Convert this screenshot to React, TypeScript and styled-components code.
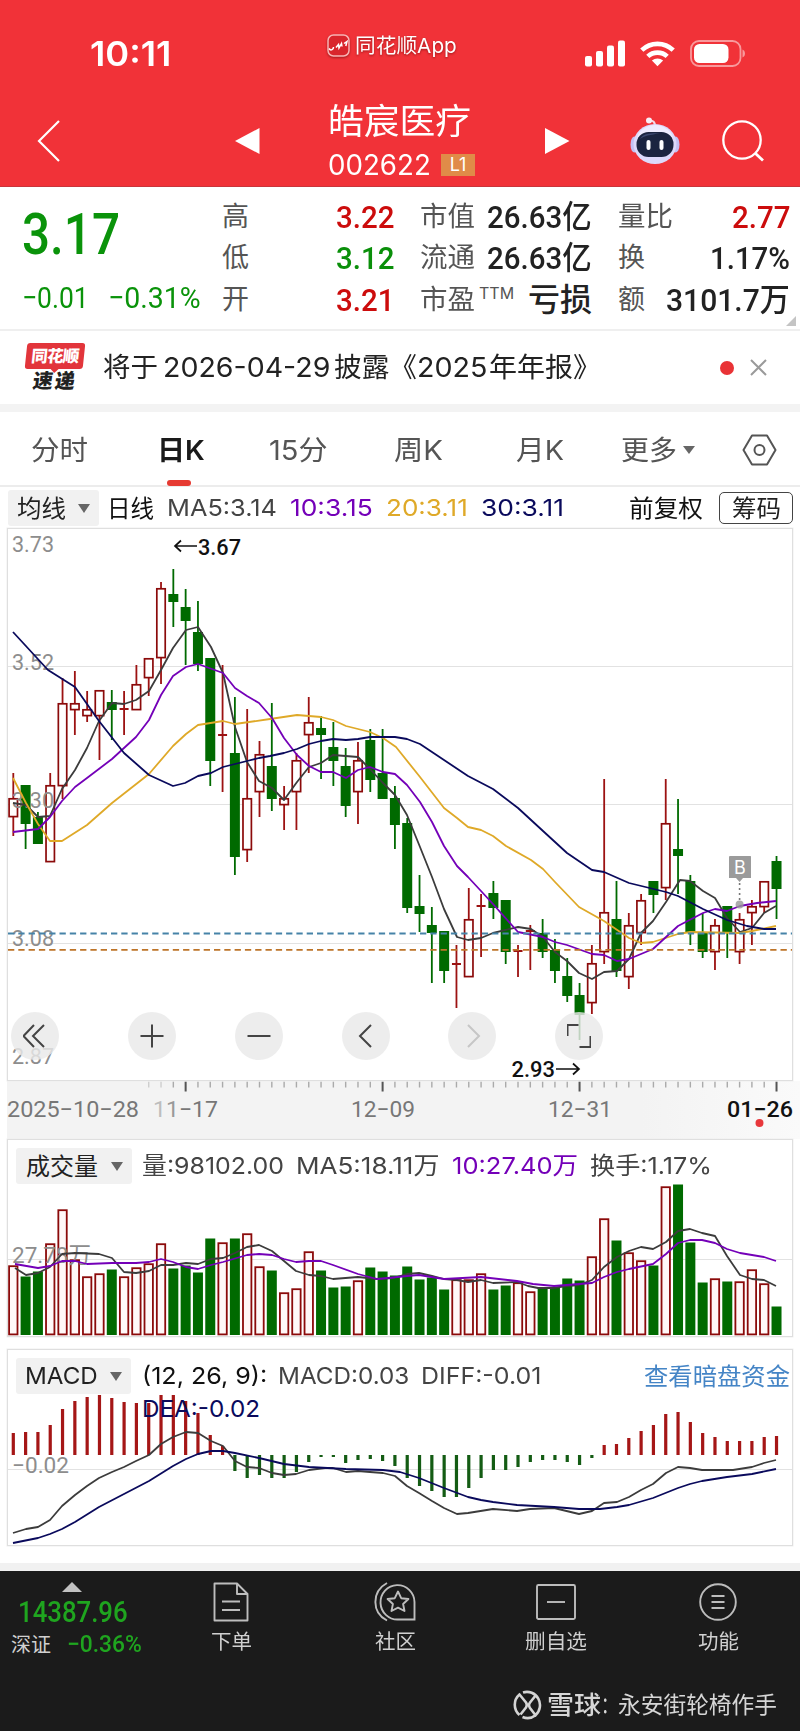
import React, { useLayoutEffect, useRef, useState } from "react";
import styled, { createGlobalStyle } from "styled-components";

const SANS = 'Inter, "Noto Sans CJK SC", sans-serif';
const DIN = 'Roboto, "Noto Sans CJK SC", sans-serif';

const UP = "#8b0a0a";
const UP_BODY = "#9c1212";
const DOWN = "#006a00";
const NAVY = "#0a0a5c";
const PURPLE = "#7400b8";
const ORANGE = "#dfa928";
const INK = "#3c3c3c";

const Global = createGlobalStyle`
  * { box-sizing: border-box; }
  body { margin: 0; background: #fff; font-family: ${SANS}; }
  svg { display: block; }
`;

/* ---------- text that keeps a given width ---------- */

const FitBox = styled.span<{ $w: number }>`
  display: block;
  flex: none;
  width: ${(p) => p.$w}px;
  white-space: nowrap;
`;

const FitInner = styled.span<{ $size: number; $weight: number; $color: string; $din?: boolean }>`
  display: inline-block;
  transform-origin: 0 50%;
  font-family: ${(p) => (p.$din ? DIN : SANS)};
  font-size: ${(p) => p.$size}px;
  font-weight: ${(p) => p.$weight};
  color: ${(p) => p.$color};
  line-height: ${(p) => Math.round(p.$size * 1.2)}px;
  vertical-align: top;
`;

type FitProps = {
  w: number;
  size: number;
  weight?: number;
  color?: string;
  din?: boolean;
  className?: string;
  children: React.ReactNode;
};

function Fit({ w, size, weight = 400, color = "#222", din, className, children }: FitProps) {
  const ref = useRef<HTMLSpanElement>(null);
  const [k, setK] = useState(1);
  useLayoutEffect(() => {
    if (ref.current) setK(w / ref.current.offsetWidth);
  }, [w]);
  return (
    <FitBox $w={w} className={className}>
      <FitInner
        ref={ref}
        $size={size}
        $weight={weight}
        $color={color}
        $din={din}
        style={{ transform: `scaleX(${k})` }}
      >
        {children}
      </FitInner>
    </FitBox>
  );
}

/* ---------- page ---------- */

const Page = styled.div`
  width: 800px;
  height: 1731px;
  overflow: hidden;
  display: flex;
  flex-direction: column;
  background: #fff;
`;

const Header = styled.header`
  height: 187px;
  background: #f13238;
  border-bottom: 1px solid #c9353b;
`;

const StatusBar = styled.div`
  height: 95px;
  display: flex;
  align-items: center;
  padding: 12px 54px 0 90px;
`;

const AppTag = styled.div`
  display: flex;
  align-items: center;
  gap: 5px;
  margin: -16px 0 0 156px;
  filter: drop-shadow(0 1px 1px rgba(90, 0, 0, 0.55));
`;

const StatusIcons = styled.div`
  margin-left: auto;
  display: flex;
  align-items: center;
  gap: 15px;
`;

const NavBar = styled.nav`
  height: 91px;
  display: grid;
  grid-template-columns: 233px 95px 217px 85px 90px 80px;
  align-items: center;
`;

const NavCell = styled.div<{ $pad?: number }>`
  padding-left: ${(p) => p.$pad ?? 0}px;
`;

const TitleBlock = styled.div`
  display: flex;
  flex-direction: column;
  gap: 6px;
`;

const CodeLine = styled.div`
  display: flex;
  align-items: center;
  gap: 10px;
`;

const LevelBadge = styled.span`
  width: 34px;
  height: 22px;
  background: #e08b48;
  color: #fff;
  font-size: 18px;
  line-height: 22px;
  text-align: center;
`;

/* ---------- quote ---------- */

const Quote = styled.section`
  position: relative;
  height: 144px;
  padding: 9px 12px 0 22px;
  display: grid;
  grid-template-columns: 200px 198px 198px 170px;
  border-bottom: 2px solid #efefef;
`;

const PriceBlock = styled.div`
  padding-top: 5px;
`;

const ChangeLine = styled.div`
  display: flex;
  gap: 19px;
  margin-top: 11px;
`;

const StatColumn = styled.div<{ $w: number }>`
  width: ${(p) => p.$w}px;
  display: grid;
  grid-template-rows: repeat(3, 41.5px);
`;

const Stat = styled.div`
  display: flex;
  align-items: center;
  justify-content: space-between;
`;

const StatLabel = styled.div`
  display: flex;
  align-items: flex-start;
  gap: 4px;
`;

const Corner = styled.i`
  position: absolute;
  right: 4px;
  bottom: 3px;
  border-style: solid;
  border-width: 0 0 10px 10px;
  border-color: transparent transparent #c4c4c4 transparent;
`;

/* ---------- notice ---------- */

const Notice = styled.section`
  height: 73px;
  padding: 0 33px 0 25px;
  display: flex;
  align-items: center;
`;

const Express = styled.div`
  width: 60px;
  display: flex;
  flex-direction: column;
  align-items: center;
  margin-right: 18px;
`;

const Bubble = styled.div`
  position: relative;
  width: 58px;
  height: 26px;
  border-radius: 3px;
  background: #e2353b;
  transform: skewX(-6deg);
  color: #fff;
  font-size: 16.5px;
  font-weight: 900;
  line-height: 26px;
  text-align: center;
  letter-spacing: -0.8px;
  &::after {
    content: "";
    position: absolute;
    left: 26px;
    top: 26px;
    border-style: solid;
    border-width: 4px 4px 0 4px;
    border-color: #e2353b transparent transparent transparent;
  }
`;

const BubbleFoot = styled.div`
  transform: skewX(-8deg);
  font-size: 20px;
  font-weight: 900;
  line-height: 23px;
  margin-top: 1px;
  letter-spacing: 2px;
  color: #222;
`;

const NoticeDot = styled.i`
  width: 14px;
  height: 14px;
  border-radius: 50%;
  background: #e93336;
  margin: 0 16px 0 auto;
`;

/* ---------- tabs ---------- */

const Tabs = styled.div`
  height: 83px;
  border-top: 8px solid #f3f3f3;
  border-bottom: 2px solid #ececec;
  display: grid;
  grid-template-columns: 31px 126px 112px 125px 122px 105px 121px 1fr;
  align-items: center;
`;

const Tab = styled.div<{ $active?: boolean }>`
  position: relative;
  display: flex;
  align-items: center;
  height: 100%;
  padding-top: 3px;
  gap: 6px;
  ${(p) =>
    p.$active &&
    `&::after {
      content: "";
      position: absolute;
      left: 10px;
      bottom: -1px;
      width: 24px;
      height: 6px;
      border-radius: 3px;
      background: #e63a32;
    }`}
`;

const Caret = styled.i<{ $size?: number }>`
  border-style: solid;
  border-width: ${(p) => (p.$size ?? 6) * 1.4}px ${(p) => p.$size ?? 6}px 0;
  border-color: #666 transparent transparent;
`;

/* ---------- indicator rows and panels ---------- */

const IndicatorRow = styled.div`
  height: 41px;
  padding: 1px 7px 0 8px;
  display: flex;
  align-items: center;
`;

const Picker = styled.div<{ $w: number; $pad: number }>`
  width: ${(p) => p.$w}px;
  height: 36px;
  padding: 0 9px 0 ${(p) => p.$pad}px;
  display: flex;
  align-items: center;
  justify-content: space-between;
  background: #f1f1f1;
  border-radius: 3px;
`;

const Gap = styled.span<{ $w: number }>`
  flex: 0 0 ${(p) => p.$w}px;
`;

const Push = styled.span`
  margin-left: auto;
`;

const ChipButton = styled.button`
  width: 74px;
  height: 32px;
  margin-left: 16px;
  padding: 0 0 0 11px;
  border: 1.5px solid #444;
  border-radius: 5px;
  background: #fff;
  display: flex;
  align-items: center;
`;

const Panel = styled.section<{ $h: number; $mt?: number }>`
  position: relative;
  height: ${(p) => p.$h}px;
  margin: ${(p) => p.$mt ?? 0}px 7px 0;
  border: 1px solid #dfdfdf;
  box-shadow: 0 0 0 0.5px #efefef;
`;

const PanelHead = styled.div`
  height: 45px;
  padding: 7px 2px 0 8px;
  display: flex;
  align-items: center;
`;

const Controls = styled.div`
  position: absolute;
  left: 3px;
  bottom: 20px;
  width: 592px;
  height: 48px;
  display: grid;
  grid-template-columns: 116.5px 107px 107px 106.5px 106.5px 48px;
`;

const RoundButton = styled.button<{ $dim?: boolean }>`
  width: 48px;
  height: 48px;
  padding: 0;
  border: 0;
  border-radius: 50%;
  background: rgba(233, 233, 233, 0.82);
  color: ${(p) => (p.$dim ? "#c6c6c6" : "#444")};
  display: grid;
  place-items: center;
`;

const Axis = styled.div`
  margin-left: 7px;
  height: 58px;
  background: linear-gradient(90deg, #f3f3f3 80%, #fafafa);
`;

/* ---------- bottom bar ---------- */

const BottomBar = styled.footer`
  margin-top: auto;
  height: 168px;
  border-top: 8px solid #f1f1f1;
  background: #1b1b1b;
  display: flex;
  flex-direction: column;
`;

const BottomItems = styled.div`
  height: 110px;
  display: grid;
  grid-template-columns: 158px 146px 182px 140px 184px;
  padding-top: 11px;
`;

const IndexBlock = styled.div`
  padding-left: 11px;
`;

const IndexCaret = styled.i`
  display: block;
  width: 0;
  margin-left: 51px;
  border-style: solid;
  border-width: 0 10px 10px;
  border-color: transparent transparent #c2c2c2;
`;

const IndexValue = styled.div`
  padding-left: 7px;
  margin-top: 3px;
`;

const IndexChange = styled.div`
  display: flex;
  align-items: center;
  gap: 16px;
  margin-top: 0;
`;

const BottomItem = styled.div`
  display: flex;
  flex-direction: column;
  align-items: center;
  gap: 8px;
  color: #bdbdbd;
`;

const Watermark = styled.div`
  display: flex;
  align-items: center;
  padding-left: 513px;
  height: 48px;
`;

/* ---------- chart data ---------- */

const X0 = 13.3;
const STEP = 12.31;
const cx = (i: number) => X0 + STEP * i;

type Candle = [up: 0 | 1, top: number, bottom: number, high: number, low: number];

const candles: Candle[] = [
  [1, 798, 817, 773, 836], [0, 785, 824, 785, 849], [0, 817, 844, 812, 844], [1, 785, 862, 773, 862],
  [1, 703, 786, 678, 799], [1, 703, 710, 671, 735], [1, 709, 716, 691, 722], [1, 690, 716, 690, 760],
  [0, 702, 710, 690, 740], [1, 709, 709, 691, 735], [1, 684, 710, 665, 710], [1, 658, 678, 658, 696],
  [1, 588, 658, 582, 684], [0, 594, 602, 569, 627], [0, 607, 621, 589, 665], [0, 632, 664, 601, 671],
  [0, 658, 761, 658, 786], [1, 735, 735, 665, 792], [0, 753, 857, 697, 875], [1, 798, 850, 709, 862],
  [1, 754, 792, 741, 817], [0, 766, 799, 703, 811], [1, 798, 805, 786, 830], [1, 760, 792, 753, 830],
  [1, 722, 735, 697, 773], [0, 728, 735, 716, 779], [0, 747, 761, 722, 786], [0, 766, 806, 748, 817],
  [1, 760, 792, 742, 824], [0, 740, 780, 729, 792], [0, 773, 799, 729, 799], [0, 798, 825, 786, 849],
  [0, 823, 908, 818, 913], [0, 906, 914, 875, 932], [0, 925, 933, 907, 983], [0, 931, 971, 931, 983],
  [1, 964, 964, 945, 1008], [1, 919, 977, 888, 977], [1, 906, 906, 894, 957], [0, 893, 908, 881, 919],
  [0, 900, 952, 900, 964], [1, 951, 951, 945, 977], [1, 931, 931, 925, 970], [0, 933, 952, 919, 958],
  [0, 950, 971, 939, 983], [0, 976, 996, 958, 1002], [0, 995, 1015, 983, 1040], [1, 963, 1003, 945, 1014],
  [1, 912, 952, 779, 964], [0, 919, 971, 881, 977], [1, 925, 977, 913, 989], [1, 900, 933, 894, 945],
  [0, 881, 895, 881, 913], [1, 823, 888, 779, 900], [0, 849, 856, 799, 894], [0, 881, 933, 875, 945],
  [0, 932, 952, 913, 958], [1, 925, 952, 919, 970], [0, 906, 932, 906, 958], [1, 919, 952, 913, 964],
  [1, 906, 913, 900, 945], [1, 881, 907, 881, 913], [0, 861, 889, 856, 919],
];

const volumeTops = [
  1266, 1277, 1272, 1244, 1210, 1260, 1277, 1274, 1270, 1277, 1268, 1264, 1244, 1269, 1266, 1273, 1239, 1243,
  1239, 1234, 1267, 1271, 1293, 1289, 1252, 1271, 1288, 1287, 1281, 1268, 1272, 1276, 1267, 1280, 1278, 1290,
  1280, 1280, 1274, 1290, 1286, 1283, 1292, 1288, 1288, 1279, 1281, 1257, 1219, 1241, 1253, 1261, 1266, 1187,
  1185, 1243, 1283, 1279, 1282, 1282, 1270, 1284, 1307,
];

const macdEnds = [
  1433, 1432, 1432, 1425, 1409, 1401, 1397, 1395, 1398, 1402, 1403, 1403, 1395, 1395, 1401, 1413, 1435, 1446,
  1471, 1478, 1475, 1478, 1478, 1472, 1462, 1457, 1457, 1463, 1460, 1459, 1461, 1466, 1478, 1486, 1491, 1497,
  1497, 1488, 1478, 1470, 1470, 1467, 1462, 1460, 1460, 1462, 1465, 1458, 1445, 1444, 1438, 1431, 1425, 1414,
  1412, 1422, 1433, 1437, 1441, 1441, 1441, 1437, 1436,
];

const ma30 =
  "13,632 48,670 75,687 99,721 124,753 149,775 173,786 185,783 198,776 211,773 223,767 235,764 247,761 259,758 270,756 284,753 297,749 309,744 321,741 333,739 346,740 358,739 370,737 395,737 407,739 420,744 444,760 468,776 493,789 518,808 543,831 567,853 592,870 604,872 629,883 666,892 678,896 703,909 727,920 747,926 764,929 776,929";
const ma20 =
  "13,778 26,803 38,824 50,841 62,841 87,825 112,803 149,774 173,746 186,734 198,725 223,721 235,724 270,719 297,715 321,717 333,720 346,726 358,729 370,732 383,738 396,747 420,777 444,808 457,818 468,827 481,830 493,836 506,846 531,860 543,869 555,882 579,907 604,921 629,938 641,943 653,942 678,934 690,932 740,933 752,931 776,926";
const ma10 =
  "13,832 38,829 50,817 62,801 75,787 87,778 112,759 136,737 149,720 161,695 173,676 186,667 198,664 223,673 235,688 247,696 259,703 272,718 284,738 297,755 309,766 321,772 333,772 346,778 358,770 370,767 383,772 395,774 407,785 420,802 432,822 444,846 457,866 468,877 481,891 493,904 518,932 543,937 555,942 567,945 592,954 604,955 617,961 629,959 653,949 678,926 703,913 715,909 727,911 740,906 757,903 776,901";
const ma5 =
  "13,803 26,805 38,817 50,816 62,789 75,770 87,748 99,721 112,703 124,704 136,700 149,691 161,670 173,648 186,630 198,627 211,647 223,673 235,727 247,762 259,781 272,788 284,800 297,782 309,767 321,763 333,755 358,757 370,769 382,782 395,795 407,815 420,847 432,877 444,909 457,937 468,940 481,938 493,933 518,927 531,929 543,937 555,952 567,961 579,973 592,979 604,972 617,971 629,959 641,933 653,921 666,902 680,880 690,881 703,891 715,898 727,918 740,932 752,928 764,913 776,906";

const vol5 =
  "15,1268 26,1275 38,1273 50,1267 62,1254 75,1253 99,1254 112,1258 124,1272 136,1273 149,1271 161,1265 173,1265 186,1263 198,1264 211,1259 223,1258 235,1253 247,1247 259,1245 272,1251 284,1261 296,1271 309,1275 321,1276 333,1279 358,1277 377,1279 393,1278 407,1274 419,1273 432,1276 444,1279 457,1280 468,1282 481,1280 493,1283 517,1282 528,1286 538,1288 552,1288 567,1286 579,1285 592,1280 604,1267 617,1257 629,1251 641,1247 653,1249 666,1242 678,1231 690,1229 702,1233 715,1236 727,1256 740,1275 752,1279 764,1280 776,1286";
const vol10 =
  "15,1264 38,1268 50,1266 62,1261 75,1261 87,1264 112,1263 136,1263 149,1262 161,1259 173,1262 186,1267 198,1269 211,1265 223,1262 247,1255 259,1254 272,1255 284,1259 296,1262 309,1261 321,1261 333,1265 358,1274 377,1279 388,1278 407,1276 419,1275 444,1279 481,1277 517,1281 533,1284 554,1286 579,1284 592,1283 604,1277 617,1272 629,1269 653,1264 666,1254 678,1243 690,1240 702,1240 715,1243 727,1249 740,1253 764,1257 776,1261";

const diff =
  "13,1533 26,1529 38,1527 50,1520 62,1506 75,1495 87,1486 99,1478 112,1472 124,1467 136,1461 149,1455 161,1444 173,1437 186,1432 198,1433 211,1441 223,1446 235,1461 247,1467 259,1468 272,1473 284,1475 296,1474 309,1470 325,1468 333,1468 346,1472 358,1471 370,1472 383,1473 395,1476 407,1486 419,1493 432,1501 444,1508 457,1514 468,1513 493,1509 517,1511 530,1509 554,1508 579,1514 592,1511 604,1503 617,1502 629,1497 641,1490 653,1484 666,1473 678,1467 690,1468 702,1470 733,1470 752,1467 764,1463 776,1460";
const dea =
  "13,1543 38,1538 50,1534 62,1529 75,1522 99,1507 124,1494 149,1481 173,1466 186,1459 198,1454 211,1451 223,1451 235,1453 259,1458 284,1464 309,1467 346,1469 383,1470 400,1472 419,1478 444,1488 468,1497 481,1500 493,1502 517,1505 554,1507 579,1509 600,1509 617,1507 629,1505 653,1498 678,1488 690,1484 702,1481 727,1477 752,1474 776,1469";

const Plot = styled.svg`
  overflow: visible;
`;

const Line = styled.polyline`
  fill: none;
  stroke-width: 1.8;
  stroke-linejoin: round;
`;

const Grid = styled.line`
  stroke: #e2e2e2;
  stroke-width: 1.2;
`;

const ScaleText = styled.text`
  font-family: ${DIN};
  font-size: 22.5px;
  fill: #8d8d8d;
`;

const AxisText = styled(ScaleText)`
  fill: #777;
`;

const MarkText = styled(ScaleText)`
  fill: #111;
  font-weight: 500;
`;

function CandleChart() {
  return (
    <Plot width="784" height="551" viewBox="8 529 784 551">
      {[666.5, 804.5, 943.5].map((y) => (
        <Grid key={y} x1="8" x2="792" y1={y} y2={y} />
      ))}
      {candles.map(([up, top, bottom, high, low], i) => {
        const x = cx(i);
        if (!up)
          return (
            <g key={i} fill={DOWN}>
              <rect x={x - 0.9} y={high} width="1.8" height={low - high} />
              <rect x={x - 5} y={top} width="10" height={bottom - top} />
            </g>
          );
        if (top === bottom)
          return (
            <g key={i} fill={UP_BODY}>
              <rect x={x - 0.9} y={high} width="1.8" height={low - high} />
              <rect x={x - 4.5} y={top - 1} width="9" height="2" />
            </g>
          );
        return (
          <g key={i}>
            <rect x={x - 0.9} y={high} width="1.8" height={low - high} fill={UP_BODY} />
            <rect
              x={x - 4.2}
              y={top + 0.8}
              width="8.4"
              height={bottom - top - 1.2}
              fill="#fff"
              stroke={UP}
              strokeWidth="1.7"
            />
          </g>
        );
      })}
      <ScaleText x="12" y="552" textLength="42" lengthAdjust="spacingAndGlyphs">3.73</ScaleText>
      <ScaleText x="12" y="669.5" textLength="42" lengthAdjust="spacingAndGlyphs">3.52</ScaleText>
      <ScaleText x="12" y="807.5" textLength="42" lengthAdjust="spacingAndGlyphs">3.30</ScaleText>
      <ScaleText x="12" y="946" textLength="42" lengthAdjust="spacingAndGlyphs">3.08</ScaleText>
      <ScaleText x="12" y="1064" textLength="42" lengthAdjust="spacingAndGlyphs">2.87</ScaleText>
      <Line points={ma5} stroke={INK} />
      <Line points={ma20} stroke={ORANGE} />
      <Line points={ma10} stroke={PURPLE} />
      <Line points={ma30} stroke={NAVY} />
      <line x1="8" x2="792" y1="933.5" y2="933.5" stroke="#4683a8" strokeWidth="1.8" strokeDasharray="6.3 4" />
      <line x1="8" x2="792" y1="949.8" y2="949.8" stroke="#bd7428" strokeWidth="1.8" strokeDasharray="6.3 4" />

      <g stroke="#111" strokeWidth="1.7" fill="none">
        <path d="M197 546H175M181 540.5L175 546L181 551.5" />
        <path d="M556 1069H579M573 1063.5L579 1069L573 1074.5" />
      </g>
      <MarkText x="198" y="554.5" textLength="43" lengthAdjust="spacingAndGlyphs">3.67</MarkText>
      <MarkText x="511.5" y="1077" textLength="43.5" lengthAdjust="spacingAndGlyphs">2.93</MarkText>

      <circle cx="739.6" cy="904.5" r="4" fill="#999" fillOpacity="0.8" />
      <path d="M739.6 883V901" stroke="#777" strokeWidth="1.6" strokeDasharray="2 3" />
      <path d="M730 856H750.5Q751 856 751 857V878H743L739.6 882L736 878H729V857Q729 856 730 856Z" fill="#9b9b9b" />
      <text x="740" y="873.5" textAnchor="middle" fontFamily={SANS} fontSize="18" fill="#fff">B</text>
    </Plot>
  );
}

const axisLabels = [
  { x: 7, w: 132, text: "2025−10−28" },
  { x: 351, w: 64, text: "12−09" },
  { x: 548, w: 64, text: "12−31" },
];

function TimeAxis() {
  return (
    <Axis>
      <svg width="793" height="58" viewBox="7 1081 793 58">
        {candles.map((_, i) => {
          if (i < 11) return null;
          const major = i === 14 || i === 30 || i === 46 || i === 62;
          return (
            <rect
              key={i}
              x={cx(i) - (major ? 1 : 0.7)}
              y={1081.5}
              width={major ? 2 : 1.4}
              height={major ? 10 : 6}
              fill={major ? "#555" : "#aaa"}
              opacity={i < 13 ? 0.5 : 1}
            />
          );
        })}
        {axisLabels.map((l) => (
          <AxisText key={l.text} x={l.x} y="1117" textLength={l.w} lengthAdjust="spacingAndGlyphs">
            {l.text}
          </AxisText>
        ))}
        <AxisText x="153" y="1117" textLength="65" lengthAdjust="spacingAndGlyphs">
          <tspan fill="#bdbdbd">1</tspan>
          <tspan fill="#999">1</tspan>−17
        </AxisText>
        <MarkText x="727" y="1117" textLength="66" lengthAdjust="spacingAndGlyphs">01−26</MarkText>
        <circle cx="759.5" cy="1123" r="4" fill="#e8383c" />
      </svg>
    </Axis>
  );
}

function VolumeChart() {
  return (
    <Plot width="784" height="151" viewBox="8 1185 784 151">
      <Grid x1="8" x2="792" y1="1259.5" y2="1259.5" />
      {candles.map(([up], i) => {
        const x = cx(i);
        const top = volumeTops[i];
        return up ? (
          <rect
            key={i}
            x={x - 4.2}
            y={top + 0.2}
            width="8.4"
            height={1334.2 - top}
            fill="#fff8f8"
            stroke={UP}
            strokeWidth="1.8"
          />
        ) : (
          <rect key={i} x={x - 5} y={top - 0.5} width="10" height={1335.5 - top} fill={DOWN} />
        );
      })}
      <ScaleText x="12" y="1262.5" textLength="79" lengthAdjust="spacingAndGlyphs">27.78万</ScaleText>
      <Line points={vol5} stroke={INK} />
      <Line points={vol10} stroke={PURPLE} />
    </Plot>
  );
}

function MacdChart() {
  return (
    <Plot width="784" height="150" viewBox="8 1395 784 150">
      <Grid x1="8" x2="792" y1="1469.5" y2="1469.5" />
      {macdEnds.map((end, i) => {
        const up = end < 1455;
        return (
          <rect
            key={i}
            x={cx(i) - 1.6}
            y={up ? end : 1455}
            width="3.2"
            height={Math.abs(end - 1455)}
            fill={up ? "#a51616" : "#145c14"}
          />
        );
      })}
      <ScaleText x="12" y="1472.5" textLength="57" lengthAdjust="spacingAndGlyphs">−0.02</ScaleText>
      <Line points={diff} stroke={INK} />
      <Line points={dea} stroke={NAVY} />
      <text
        x="142"
        y="1417"
        textLength="118"
        lengthAdjust="spacingAndGlyphs"
        fontFamily={SANS}
        fontSize="23.5"
        fill={NAVY}
      >
        DEA:-0.02
      </text>
    </Plot>
  );
}

/* ---------- icons ---------- */

const stroked = { fill: "none", stroke: "currentColor" } as const;

const SignalIcon = () => (
  <svg width="40" height="27" viewBox="0 0 40 27" fill="#fff">
    <rect x="0" y="16" width="7" height="10.5" rx="2" />
    <rect x="11" y="11" width="7" height="15.5" rx="2" />
    <rect x="22" y="5.5" width="7" height="21" rx="2" />
    <rect x="33" y="0.5" width="7" height="26" rx="2" />
  </svg>
);

const WifiIcon = () => (
  <svg width="35" height="26" viewBox="0 0 35 26" fill="none" stroke="#fff" strokeWidth="4.6">
    <path d="M1.8 9.2C10.5 0.7 24.5 0.7 33.2 9.2" />
    <path d="M7.8 15.4C13.2 10.3 21.8 10.3 27.2 15.4" />
    <path d="M17.5 25.2L11.9 19.5C15.1 16.8 19.9 16.8 23.1 19.5Z" fill="#fff" stroke="none" />
  </svg>
);

const BatteryIcon = () => (
  <svg width="56" height="27" viewBox="0 0 56 27">
    <rect x="1" y="1" width="49.5" height="25" rx="8" fill="none" stroke="#fff" strokeOpacity="0.5" strokeWidth="1.8" />
    <rect x="4" y="4" width="34.5" height="19" rx="5.5" fill="#fff" />
    <path d="M52.5 9.5C55.8 10.8 55.8 16.2 52.5 17.5Z" fill="#fff" fillOpacity="0.5" />
  </svg>
);

const AppIcon = () => (
  <svg width="23" height="23" viewBox="0 0 23 23">
    <rect x="1" y="1" width="21" height="21" rx="5.5" fill="#d9252c" stroke="#f9b4b4" strokeWidth="1.5" />
    <path d="M2 14.5C4 17.5 6.5 15 6.5 13M9 13.5L11.5 10.5L12 14L14.5 9.5L15 12.5M17 9.5L20 7.5L18.8 12" fill="none" stroke="#fff" strokeWidth="1.5" />
  </svg>
);

const RobotIcon = () => (
  <svg width="50" height="48" viewBox="0 0 50 48">
    <path d="M25 9C25 5 23 3.5 20 3.5" fill="none" stroke="#f4d9e6" strokeWidth="2.2" />
    <circle cx="19" cy="3.5" r="3" fill="#f8eef6" />
    <ellipse cx="4.5" cy="27.5" rx="4" ry="8" fill="#c3c0f4" />
    <ellipse cx="45.5" cy="27.5" rx="4" ry="8" fill="#c3c0f4" />
    <ellipse cx="25" cy="27" rx="21.5" ry="20" fill="#dcd9fb" />
    <ellipse cx="25" cy="23" rx="18" ry="15" fill="#eeecff" />
    <rect x="6.5" y="15" width="37" height="25" rx="12" fill="#1b2440" />
    <path d="M10 22C13 16.5 20 16 30 16.3C20 18 14 19 10 22Z" fill="#3c4870" />
    <rect x="16.5" y="23" width="4" height="10" rx="2" fill="#fff" />
    <rect x="29.5" y="23" width="4" height="10" rx="2" fill="#fff" />
  </svg>
);

const StarIcon = () => (
  <svg width="42" height="40" viewBox="0 0 42 40" {...stroked} strokeWidth="1.9">
    <path d="M13 1C-2.5 9.5 -2.5 30.5 13 38.5" />
    <path d="M40 37.5H24.5A17 17.2 0 1 1 40.5 20V37.5Z" />
    <path d="M24 9.5L27.2 16.2L34.4 17L29.1 22L30.5 29L24 25.6L17.5 29L18.9 22L13.6 17L20.8 16.2Z" strokeLinejoin="round" />
  </svg>
);

const DocIcon = () => (
  <svg width="36" height="40" viewBox="0 0 36 40" {...stroked} strokeWidth="1.9">
    <path d="M1.5 1.5H24L34.5 12V38.5H1.5ZM24 1.5V12H34.5" strokeLinejoin="round" />
    <path d="M9 19.5H27M9 28H27" />
  </svg>
);

const MinusIcon = () => (
  <svg width="40" height="40" viewBox="0 0 40 40" {...stroked} strokeWidth="1.9">
    <rect x="1" y="3" width="38" height="34" rx="1.5" />
    <path d="M11 20H29" />
  </svg>
);

const MenuIcon = () => (
  <svg width="38" height="40" viewBox="0 0 38 40" {...stroked} strokeWidth="1.9">
    <circle cx="19" cy="20" r="17.8" />
    <path d="M12.5 14H25.5M12.5 20H25.5M12.5 26H25.5" />
  </svg>
);

const SnowballIcon = () => (
  <svg width="29" height="30" viewBox="0 0 29 30" fill="none" stroke="#d4d4d4" strokeWidth="2.6">
    <path d="M6.5 25A13 13.3 0 0 1 6.5 4.500L13 12.500Q14.600 15 13 17.500L7.500 24.500" />
    <path d="M10 2.500A13 13.300 0 0 1 22.500 25.200L17 18Q15 15 17 12.500L23 5" />
    <path d="M9.500 27A13 13.300 0 0 0 22.500 25.200" />
  </svg>
);

const glyphs = [
  "M21 1L10 12L21 23M11 1L0.5 12L11 23",
  "M12 0.5V23.5M0.5 12H23.5",
  "M0.5 12H23.5",
  "M17 1L6 12L17 23",
  "M8 1L19 12L8 23",
  "M0.5 12V1H11.5M23.5 12V23H12.5",
];

const bottomItems = [
  { label: "下单", w: 41, icon: <DocIcon /> },
  { label: "社区", w: 41, icon: <StarIcon /> },
  { label: "删自选", w: 62, icon: <MinusIcon /> },
  { label: "功能", w: 41, icon: <MenuIcon /> },
];

export default function App() {
  return (
    <Page>
      <Global />
      <Header>
        <StatusBar>
          <Fit w={81} size={34} weight={600} color="#fff">10:11</Fit>
          <AppTag>
            <AppIcon />
            <Fit w={102} size={20.5} color="#fff">同花顺App</Fit>
          </AppTag>
          <StatusIcons>
            <SignalIcon />
            <WifiIcon />
            <BatteryIcon />
          </StatusIcons>
        </StatusBar>
        <NavBar>
          <NavCell $pad={37}>
            <svg width="24" height="42" viewBox="0 0 24 42" fill="none" stroke="#fff" strokeWidth="2.2">
              <path d="M22 1L2 21L22 41" />
            </svg>
          </NavCell>
          <NavCell $pad={2}>
            <svg width="25" height="26" viewBox="0 0 25 26" fill="#fff"><path d="M0 13L24.5 0V26Z" /></svg>
          </NavCell>
          <TitleBlock>
            <Fit w={143} size={35} color="#fff">皓宸医疗</Fit>
            <CodeLine>
              <Fit w={103} size={28.5} color="#fff">002622</Fit>
              <LevelBadge>L1</LevelBadge>
            </CodeLine>
          </TitleBlock>
          <NavCell>
            <svg width="25" height="26" viewBox="0 0 25 26" fill="#fff"><path d="M24.5 13L0 0V26Z" /></svg>
          </NavCell>
          <NavCell><RobotIcon /></NavCell>
          <NavCell $pad={2}>
            <svg width="43" height="42" viewBox="0 0 43 42" fill="none" stroke="#fff" strokeWidth="2.3">
              <circle cx="20" cy="20" r="18.7" />
              <path d="M33.5 33.5L41 40.5" strokeWidth="2.8" />
            </svg>
          </NavCell>
        </NavBar>
      </Header>

      <Quote>
        <PriceBlock>
          <Fit w={98} size={57} weight={500} color="#0a930a" din>3.17</Fit>
          <ChangeLine>
            <Fit w={67} size={30} color="#0a930a" din>−0.01</Fit>
            <Fit w={93} size={30} color="#0a930a" din>−0.31%</Fit>
          </ChangeLine>
        </PriceBlock>
        <StatColumn $w={172}>
          <Stat><Fit w={27} size={27} color="#555">高</Fit><Fit w={58} size={32} weight={500} color="#cc0c0c" din>3.22</Fit></Stat>
          <Stat><Fit w={27} size={27} color="#555">低</Fit><Fit w={58} size={32} weight={500} color="#0a8f0a" din>3.12</Fit></Stat>
          <Stat><Fit w={27} size={27} color="#555">开</Fit><Fit w={58} size={32} weight={500} color="#cc0c0c" din>3.21</Fit></Stat>
        </StatColumn>
        <StatColumn $w={172}>
          <Stat><Fit w={55} size={27} color="#555">市值</Fit><Fit w={105} size={32} weight={500} din>26.63亿</Fit></Stat>
          <Stat><Fit w={55} size={27} color="#555">流通</Fit><Fit w={105} size={32} weight={500} din>26.63亿</Fit></Stat>
          <Stat>
            <StatLabel>
              <Fit w={55} size={27} color="#555">市盈</Fit>
              <Fit w={35} size={16} color="#555">TTM</Fit>
            </StatLabel>
            <Fit w={64} size={32} weight={500} din>亏损</Fit>
          </Stat>
        </StatColumn>
        <StatColumn $w={172}>
          <Stat><Fit w={55} size={27} color="#555">量比</Fit><Fit w={58} size={32} weight={500} color="#cc0c0c" din>2.77</Fit></Stat>
          <Stat><Fit w={27} size={27} color="#555">换</Fit><Fit w={80} size={32} weight={500} din>1.17%</Fit></Stat>
          <Stat><Fit w={27} size={27} color="#555">额</Fit><Fit w={124} size={32} weight={500} din>3101.7万</Fit></Stat>
        </StatColumn>
        <Corner />
      </Quote>

      <Notice>
        <Express>
          <Bubble>同花顺</Bubble>
          <BubbleFoot>速递</BubbleFoot>
        </Express>
        <Fit w={55} size={27}>将于</Fit>
        <Gap $w={5} />
        <Fit w={167} size={27}>2026-04-29</Fit>
        <Gap $w={4} />
        <Fit w={83} size={27}>披露《</Fit>
        <Fit w={70} size={27}>2025</Fit>
        <Gap $w={2} />
        <Fit w={112} size={27}>年年报》</Fit>
        <NoticeDot />
        <svg width="17" height="17" viewBox="0 0 17 17" stroke="#9a9a9a" strokeWidth="2">
          <path d="M1 1L16 16M16 1L1 16" />
        </svg>
      </Notice>

      <Tabs>
        <span />
        <Tab><Fit w={57} size={27.5} color="#555">分时</Fit></Tab>
        <Tab $active><Fit w={48} size={27.5} weight={600} color="#1a1a1a">日K</Fit></Tab>
        <Tab><Fit w={58} size={27.5} color="#555">15分</Fit></Tab>
        <Tab><Fit w={49} size={27.5} color="#555">周K</Fit></Tab>
        <Tab><Fit w={48} size={27.5} color="#555">月K</Fit></Tab>
        <Tab><Fit w={56} size={27.5} color="#555">更多</Fit><Caret /></Tab>
        <Tab>
          <svg width="35" height="32" viewBox="0 0 35 32" fill="none" stroke="#555" strokeWidth="2">
            <path d="M10 1.5H25L33.5 16L25 30.5H10L1.5 16Z" strokeLinejoin="round" />
            <circle cx="17.5" cy="16" r="5" />
          </svg>
        </Tab>
      </Tabs>

      <IndicatorRow>
        <Picker $w={91} $pad={9}><Fit w={49} size={24}>均线</Fit><Caret $size={6.5} /></Picker>
        <Gap $w={8} />
        <Fit w={47} size={24} color="#111">日线</Fit>
        <Gap $w={13} />
        <Fit w={110} size={23.5} color="#444">MA5:3.14</Fit>
        <Gap $w={13} />
        <Fit w={83} size={23.5} color={PURPLE}>10:3.15</Fit>
        <Gap $w={13} />
        <Fit w={82} size={23.5} color={ORANGE}>20:3.11</Fit>
        <Gap $w={13} />
        <Fit w={83} size={23.5} color={NAVY}>30:3.11</Fit>
        <Push />
        <Fit w={74} size={24} color="#111">前复权</Fit>
        <ChipButton><Fit w={49} size={24}>筹码</Fit></ChipButton>
      </IndicatorRow>

      <Panel $h={553}>
        <CandleChart />
        <Controls>
          {glyphs.map((d, i) => (
            <RoundButton key={d} $dim={i === 4}>
              <svg width="24" height="24" viewBox="0 0 24 24" {...stroked} strokeWidth="2"><path d={d} /></svg>
            </RoundButton>
          ))}
        </Controls>
      </Panel>
      <TimeAxis />

      <Panel $h={198}>
        <PanelHead>
          <Picker $w={116} $pad={10}><Fit w={72} size={24}>成交量</Fit><Caret $size={6.5} /></Picker>
          <Gap $w={10} />
          <Fit w={142} size={23.5} color="#444">量:98102.00</Fit>
          <Gap $w={12} />
          <Fit w={143} size={23.5} color="#444">MA5:18.11万</Fit>
          <Gap $w={13} />
          <Fit w={126} size={23.5} color={PURPLE}>10:27.40万</Fit>
          <Gap $w={12} />
          <Fit w={122} size={23.5} color="#444">换手:1.17%</Fit>
        </PanelHead>
        <VolumeChart />
      </Panel>

      <Panel $h={197} $mt={12}>
        <PanelHead>
          <Picker $w={115} $pad={9}><Fit w={73} size={23.5}>MACD</Fit><Caret $size={6.5} /></Picker>
          <Gap $w={11} />
          <Fit w={125} size={23.5} color="#111">(12, 26, 9):</Fit>
          <Gap $w={11} />
          <Fit w={131} size={23.5} color="#444">MACD:0.03</Fit>
          <Gap $w={12} />
          <Fit w={120} size={23.5} color="#444">DIFF:-0.01</Fit>
          <Push />
          <Fit w={146} size={24} color="#4585c6">查看暗盘资金</Fit>
        </PanelHead>
        <MacdChart />
      </Panel>

      <BottomBar>
        <BottomItems>
          <IndexBlock>
            <IndexCaret />
            <IndexValue><Fit w={110} size={29.5} weight={500} color="#1fa51f" din>14387.96</Fit></IndexValue>
            <IndexChange>
              <Fit w={40} size={20} color="#d0d0d0">深证</Fit>
              <Fit w={75} size={24} weight={500} color="#1fa51f" din>−0.36%</Fit>
            </IndexChange>
          </IndexBlock>
          {bottomItems.map((b) => (
            <BottomItem key={b.label}>
              {b.icon}
              <Fit w={b.w} size={20} color="#d0d0d0">{b.label}</Fit>
            </BottomItem>
          ))}
        </BottomItems>
        <Watermark>
          <SnowballIcon />
          <Gap $w={5} />
          <Fit w={54} size={25} weight={500} color="#d6d6d6">雪球</Fit>
          <Fit w={17} size={23} color="#d6d6d6">：</Fit>
          <Fit w={159} size={23} color="#d6d6d6">永安街轮椅作手</Fit>
        </Watermark>
      </BottomBar>
    </Page>
  );
}
